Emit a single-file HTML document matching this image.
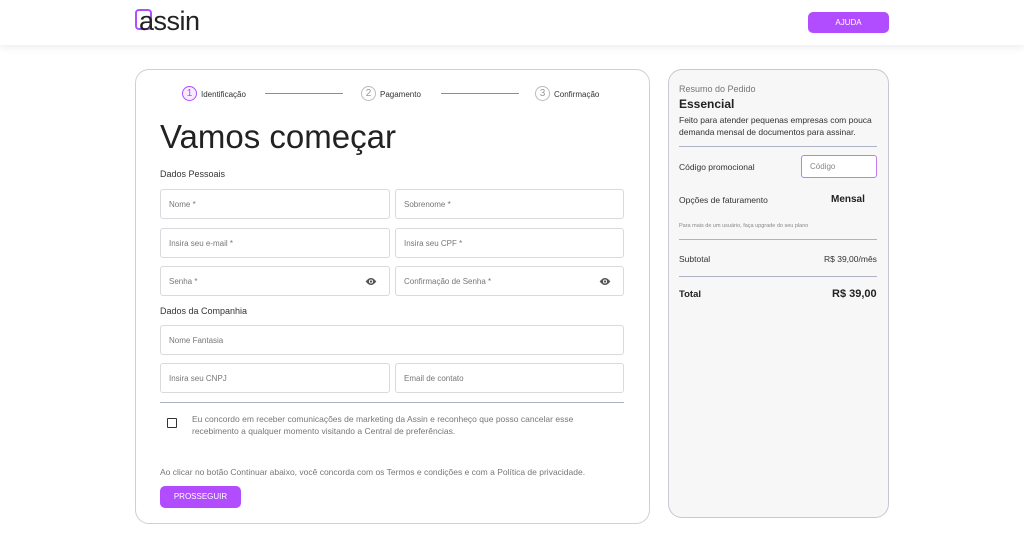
<!DOCTYPE html>
<html><head><meta charset="utf-8"><style>
*{box-sizing:border-box;margin:0;padding:0}
body{width:1024px;height:533px;background:#fff;font-family:"Liberation Sans",sans-serif;position:relative;overflow:hidden;color:#222}
.hdr{position:absolute;left:0;top:0;width:1024px;height:45px;background:#fff;box-shadow:0 2px 8px rgba(0,0,0,.08)}
.abs{position:absolute}
.btn{background:#b14cff;color:#fff;border-radius:5px;text-align:center}
.card{position:absolute;left:135px;top:69px;width:515px;height:455px;border:1px solid #cfcfd6;border-radius:14px;background:#fff}
.side{position:absolute;left:668px;top:69px;width:221px;height:449px;border:1px solid #c8c8d0;border-radius:14px;background:#f7f7f7}
.f{position:absolute;height:30px;border:1px solid #d9d9de;border-radius:3px;font-size:8px;color:#777;padding-left:8px;line-height:29px;background:#fff}
.step{position:absolute;font-size:8px;color:#333;top:90px}
.circ{position:absolute;width:15px;height:15px;border-radius:50%;border:1px solid #bbb;font-size:10px;color:#999;text-align:center;line-height:13px;top:86px}
.line{position:absolute;height:1px;background:#b36ae8;top:93px}
.hr{position:absolute;height:1px;background:#b0b3c6}
.eye{position:absolute;top:10px;right:12px}
</style></head><body>
<div class="hdr"></div>
<div class="abs" style="left:135px;top:9px;width:17px;height:21px;border:2px solid #b14cff;border-radius:4px"></div>
<div class="abs" style="left:139px;top:6px;font-size:27px;color:#222;letter-spacing:-0.5px">assin</div>
<div class="abs btn" style="left:808px;top:12px;width:81px;height:21px;font-size:8px;line-height:21px">AJUDA</div>

<div class="card"></div>
<div class="circ" style="left:182px;border-color:#b14cff;color:#b14cff;background:#f6ecff">1</div>
<div class="step" style="left:201px">Identificação</div>
<div class="line" style="left:265px;width:78px"></div>
<div class="circ" style="left:361px">2</div>
<div class="step" style="left:380px">Pagamento</div>
<div class="line" style="left:441px;width:78px"></div>
<div class="circ" style="left:535px">3</div>
<div class="step" style="left:554px">Confirmação</div>
<div class="abs" style="left:160px;top:118px;font-size:33px;color:#222">Vamos começar</div>
<div class="abs" style="left:160px;top:169px;font-size:9px;color:#333">Dados Pessoais</div>
<div class="f" style="left:160px;top:189px;width:230px">Nome *</div>
<div class="f" style="left:395px;top:189px;width:229px">Sobrenome *</div>
<div class="f" style="left:160px;top:228px;width:230px">Insira seu e-mail *</div>
<div class="f" style="left:395px;top:228px;width:229px">Insira seu CPF *</div>
<div class="f" style="left:160px;top:266px;width:230px">Senha *<svg class="eye" width="12" height="9" viewBox="0 0 24 16"><path d="M12 1C6 1 2 8 1 8c1 0 5 7 11 7s10-7 11-7c-1 0-5-7-11-7z" fill="#555"/><circle cx="12" cy="8" r="4" fill="#fff"/><circle cx="12" cy="8" r="2.3" fill="#555"/></svg></div>
<div class="f" style="left:395px;top:266px;width:229px">Confirmação de Senha *<svg class="eye" width="12" height="9" viewBox="0 0 24 16"><path d="M12 1C6 1 2 8 1 8c1 0 5 7 11 7s10-7 11-7c-1 0-5-7-11-7z" fill="#555"/><circle cx="12" cy="8" r="4" fill="#fff"/><circle cx="12" cy="8" r="2.3" fill="#555"/></svg></div>
<div class="abs" style="left:160px;top:306px;font-size:9px;color:#333">Dados da Companhia</div>
<div class="f" style="left:160px;top:325px;width:464px">Nome Fantasia</div>
<div class="f" style="left:160px;top:363px;width:230px">Insira seu CNPJ</div>
<div class="f" style="left:395px;top:363px;width:229px">Email de contato</div>
<div class="hr" style="left:160px;top:402px;width:464px"></div>
<div class="abs" style="left:167px;top:418px;width:10px;height:10px;border:1.5px solid #333;border-radius:1px"></div>
<div class="abs" style="left:192px;top:413px;font-size:8.5px;color:#777;line-height:12px;width:420px">Eu concordo em receber comunicações de marketing da Assin e reconheço que posso cancelar esse recebimento a qualquer momento visitando a Central de preferências.</div>
<div class="abs" style="left:160px;top:467px;font-size:8.5px;color:#777">Ao clicar no botão Continuar abaixo, você concorda com os Termos e condições e com a Política de privacidade.</div>
<div class="abs btn" style="left:160px;top:486px;width:81px;height:22px;font-size:8px;line-height:22px">PROSSEGUIR</div>

<div class="side"></div>
<div class="abs" style="left:679px;top:84px;font-size:9px;color:#777">Resumo do Pedido</div>
<div class="abs" style="left:679px;top:97px;font-size:12px;font-weight:bold;color:#222">Essencial</div>
<div class="abs" style="left:679px;top:114px;font-size:8.5px;color:#333;line-height:12px;width:200px">Feito para atender pequenas empresas com pouca demanda mensal de documentos para assinar.</div>
<div class="hr" style="left:679px;top:146px;width:198px"></div>
<div class="abs" style="left:679px;top:162px;font-size:8.5px;color:#333">Código promocional</div>
<div class="abs" style="left:801px;top:155px;width:76px;height:23px;border:1px solid #c27cf0;border-radius:3px;background:#fff;font-size:8px;color:#888;padding-left:8px;line-height:22px">Código</div>
<div class="abs" style="left:679px;top:195px;font-size:8.5px;color:#333">Opções de faturamento</div>
<div class="abs" style="left:831px;top:194px;font-size:10px;font-weight:bold;color:#222">Mensal</div>
<div class="abs" style="left:679px;top:223px;font-size:5.5px;color:#888">Para mais de um usuário, faça upgrade do seu plano</div>
<div class="hr" style="left:679px;top:239px;width:198px"></div>
<div class="abs" style="left:679px;top:254px;font-size:8.5px;color:#333">Subtotal</div>
<div class="abs" style="left:824px;top:254px;font-size:8.5px;color:#333">R$ 39,00/mês</div>
<div class="hr" style="left:679px;top:276px;width:198px"></div>
<div class="abs" style="left:679px;top:289px;font-size:9.5px;font-weight:bold;color:#222">Total</div>
<div class="abs" style="left:832px;top:288px;font-size:11px;font-weight:bold;color:#222">R$ 39,00</div>
</body></html>
